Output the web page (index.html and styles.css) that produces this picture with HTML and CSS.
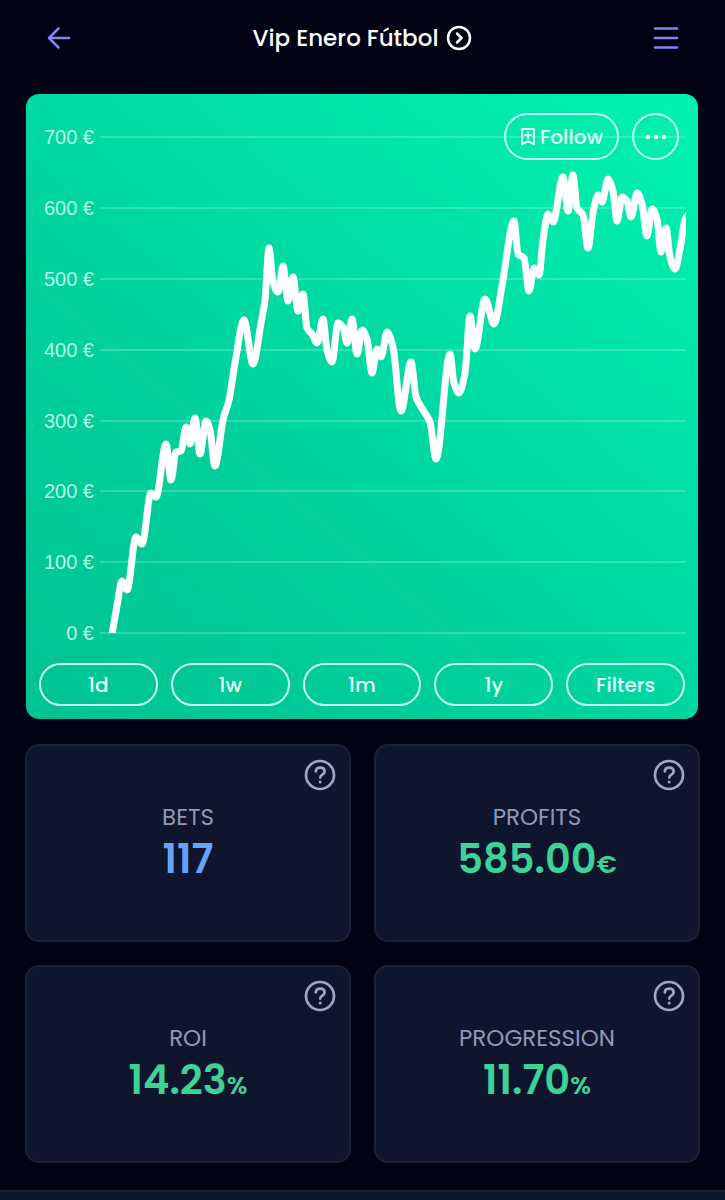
FILE: index.html
```html
<!DOCTYPE html>
<html lang="en">
<head>
<meta charset="utf-8">
<meta name="viewport" content="width=device-width, initial-scale=1">
<title>Vip Enero Fútbol</title>
<link rel="stylesheet" href="styles.css">
</head>
<body>
<svg class="sprite" aria-hidden="true">
  <symbol id="help" viewBox="0 0 32 32">
    <g fill="none" stroke="currentColor" stroke-width="2.700" stroke-linecap="round" stroke-linejoin="round">
      <circle cx="16" cy="16" r="14"/>
      <path d="M11.800 12.400C12 10 13.700 8.700 16.200 8.700C18.900 8.700 20.600 10.200 20.600 12.500C20.600 15.800 16.200 15.500 16.200 18.600"/>
    </g>
    <circle cx="16.200" cy="23" r="1.500" fill="currentColor"/>
  </symbol>
</svg>
<header class="topbar">
  <button class="icon-button" type="button" aria-label="Back">
    <svg width="24" height="24" viewBox="0 0 24 24"><path d="M22 12H2M11.500 2.500L2 12l9.500 9.500"/></svg>
  </button>
  <h1 class="title"><a class="title-link" href="#">Vip Enero Fútbol
    <svg width="26" height="26" viewBox="0 0 26 26"><circle cx="13" cy="13" r="11"/><path d="M11 8.500l4.500 4.500L11 17.500"/></svg></a></h1>
  <button class="icon-button" type="button" aria-label="Menu">
    <svg width="28" height="24" viewBox="0 0 28 24"><path d="M3 2.500h22M3 12h22M3 21.500h22"/></svg>
  </button>
</header>
<main class="content">
  <section class="chart-card" aria-label="Profit over time">
    <svg class="chart" viewBox="26 94 672 556" role="img" aria-label="Profit chart">
      <defs><clipPath id="plot"><rect x="100" y="140" width="586" height="493"/></clipPath></defs>
      <g class="grid" id="grid"></g>
      <path class="line" id="line" clip-path="url(#plot)"/>
    </svg>
    <div class="chart-actions">
      <button class="pill follow" type="button">
        <svg width="16" height="20" viewBox="0 0 16 20"><path d="M2 2h12v15.500l-6-3.500-6 3.500zM8 5v6M5 8h6"/></svg>Follow
      </button>
      <button class="pill more" type="button" aria-label="More">
        <svg width="22" height="6" viewBox="0 0 22 6"><circle cx="3" cy="3" r="2.300"/><circle cx="11" cy="3" r="2.300"/><circle cx="19" cy="3" r="2.300"/></svg>
      </button>
    </div>
    <div class="ranges">
      <button class="pill" type="button">1d</button>
      <button class="pill" type="button">1w</button>
      <button class="pill" type="button">1m</button>
      <button class="pill" type="button">1y</button>
      <button class="pill" type="button">Filters</button>
    </div>
  </section>
  <section class="stats" aria-label="Statistics">
    <article class="stat">
      <button class="help" type="button" aria-label="About bets"><svg width="32" height="32"><use href="#help"/></svg></button>
      <h2 class="stat-label">BETS</h2><p class="stat-value blue">117</p>
    </article>
    <article class="stat">
      <button class="help" type="button" aria-label="About profits"><svg width="32" height="32"><use href="#help"/></svg></button>
      <h2 class="stat-label">PROFITS</h2><p class="stat-value">585.00<span class="unit">€</span></p>
    </article>
    <article class="stat">
      <button class="help" type="button" aria-label="About ROI"><svg width="32" height="32"><use href="#help"/></svg></button>
      <h2 class="stat-label">ROI</h2><p class="stat-value">14.23<span class="unit">%</span></p>
    </article>
    <article class="stat">
      <button class="help" type="button" aria-label="About progression"><svg width="32" height="32"><use href="#help"/></svg></button>
      <h2 class="stat-label">PROGRESSION</h2><p class="stat-value">11.70<span class="unit">%</span></p>
    </article>
  </section>
</main>
<footer class="bottom-bar"></footer>
<script src="chart.js"></script>
</body>
</html>
```
FILE: styles.css
```css
* { box-sizing: border-box; }
body {
  margin: 0;
  min-height: 100vh;
  display: flex;
  flex-direction: column;
  background: #010214;
  color: #fff;
  font-family: Poppins, Inter, "Noto Sans", sans-serif;
}
button { font: inherit; color: inherit; background: none; border: 0; padding: 0; cursor: pointer; }
svg { display: block; }
h1, h2, p { margin: 0; }
.sprite { position: absolute; width: 0; height: 0; }
.topbar {
  display: flex;
  align-items: center;
  justify-content: space-between;
  height: 76px;
  padding: 0 45px;
}
.icon-button { color: #8186f3; }
.icon-button svg, .title-link svg, .follow svg {
  fill: none;
  stroke: currentColor;
  stroke-width: 2.5;
  stroke-linecap: round;
  stroke-linejoin: round;
}
.follow svg { stroke-width: 2; }
.icon-button { width: 28px; display: grid; place-items: center; }
.title { font-size: 23px; line-height: 32px; font-weight: 500; }
.title-link { display: flex; align-items: center; gap: 8px; color: #fff; text-decoration: none; }
.content { padding: 18px 25px 27px; }
.chart-card {
  position: relative;
  margin: 0 2px 0 1px;
  padding-bottom: 13px;
  border-radius: 13px;
  overflow: hidden;
  background:
    linear-gradient(40deg, transparent 36%, rgba(255, 255, 255, 0.02) 37%, transparent 40%, transparent 78%, rgba(255, 255, 255, 0.02) 80%, transparent 82%),
    linear-gradient(40deg, #00c292 0%, #00d29d 40%, #00e2a8 70%, #00f3af 100%);
}
.chart { width: 100%; height: auto; }
.grid line { stroke: #b4ffe8; stroke-opacity: 0.26; stroke-width: 2; }
.grid text { font-family: "Liberation Sans", Arial, sans-serif; font-size: 20px; fill: #b5f9e5; text-anchor: end; }
.line { fill: none; stroke: #fff; stroke-width: 7; stroke-linejoin: round; }
.chart-actions { position: absolute; top: 19px; right: 19px; display: flex; gap: 13px; }
.pill {
  height: 43px;
  border: 2px solid #c4fcee;
  border-radius: 24px;
  color: #e2fff7;
  font-size: 20px;
  font-weight: 500;
}
.chart-actions .pill { display: flex; align-items: center; justify-content: center; height: 47px; }
.follow { width: 115px; gap: 4px; }
.more { width: 47px; }
.more svg { fill: currentColor; }
.ranges { display: grid; grid-template-columns: repeat(5, 1fr); gap: 13px; padding: 13px 13px 0; }
.stats { display: grid; grid-template-columns: 1fr 1fr; gap: 23px; margin-top: 25px; }
.stat {
  position: relative;
  display: flex;
  flex-direction: column;
  align-items: center;
  min-height: 198px;
  padding-top: 55px;
  border: 2px solid #1b2136;
  border-radius: 14px;
  background: #0f152c;
}
.help { position: absolute; top: 13px; right: 13px; color: #a2a6c4; }
.stat-label { color: #9297b5; font-size: 23px; line-height: 32px; font-weight: 400; }
.stat-value { color: #3ed29b; font-size: 40px; line-height: 52px; font-weight: 600; }
.blue { color: #66a3fb; }
.unit { font-size: 25px; }
.bottom-bar { flex: 1; min-height: 10px; border-top: 2px solid #1b2136; background: #0e152a; }
```
FILE: chart.js
```js
const SVG = "http://www.w3.org/2000/svg";
const grid = document.getElementById("grid");

for (let i = 0; i <= 7; i++) {
  const y = Math.round(633 - i * 70.8);
  const line = document.createElementNS(SVG, "line");
  line.setAttribute("x1", 100);
  line.setAttribute("x2", 686);
  line.setAttribute("y1", y);
  line.setAttribute("y2", y);
  const label = document.createElementNS(SVG, "text");
  label.setAttribute("x", 94);
  label.setAttribute("y", y + 7);
  label.textContent = i * 100 + " €";
  grid.append(line, label);
}

const points = [
  [112,634],[117,606],[122,581],[127,590],[136,537],[142,544],[151,493],[156,497],[166,444],[171,480],
  [176,452],[181,451],[186,427],[190,444],[195,418],[200,454],[206,421],[210,430],[215,466],[223,420],
  [229,400],[235,363],[244,320],[253,364],[261,323],[265,300],[269,248],[273,282],[278,292],[283,266],
  [288,301],[293,277],[298,311],[303,294],[307,328],[312,334],[317,343],[323,319],[327,350],[332,362],
  [338,323],[343,327],[347,343],[352,319],[357,354],[362,330],[367,339],[372,373],[377,349],[381,357],
  [387,332],[393,347],[401,411],[411,362],[416,397],[423,410],[430,422],[436,459],[450,354],[454,383],
  [459,393],[465,373],[470,316],[475,349],[485,299],[494,324],[502,286],[514,221],[518,254],[524,258],
  [529,291],[534,268],[539,275],[543,240],[548,214],[553,222],[563,177],[568,211],[573,175],[577,208],
  [583,215],[588,248],[593,213],[598,195],[602,202],[608,179],[613,191],[617,221],[622,197],[627,201],
  [631,217],[637,193],[642,204],[647,236],[652,209],[657,219],[661,252],[666,228],[670,257],[675,269],
  [680,249],[685,220],[690,212]
];

// Monotone cubic interpolation: tangents are flat at every turning point.
const slopes = points.slice(1).map((p, i) => (p[1] - points[i][1]) / (p[0] - points[i][0]));
const tangents = points.map((p, i) => {
  if (i === 0) return slopes[0];
  if (i === points.length - 1) return slopes[i - 1];
  const a = slopes[i - 1], b = slopes[i];
  return a * b <= 0 ? 0 : 2 * a * b / (a + b);
});
let d = "M" + points[0];
for (let i = 1; i < points.length; i++) {
  const [x0, y0] = points[i - 1], [x1, y1] = points[i], h = (x1 - x0) / 3;
  d += `C${x0 + h},${y0 + h * tangents[i - 1]} ${x1 - h},${y1 - h * tangents[i]} ${x1},${y1}`;
}
document.getElementById("line").setAttribute("d", d);
```
